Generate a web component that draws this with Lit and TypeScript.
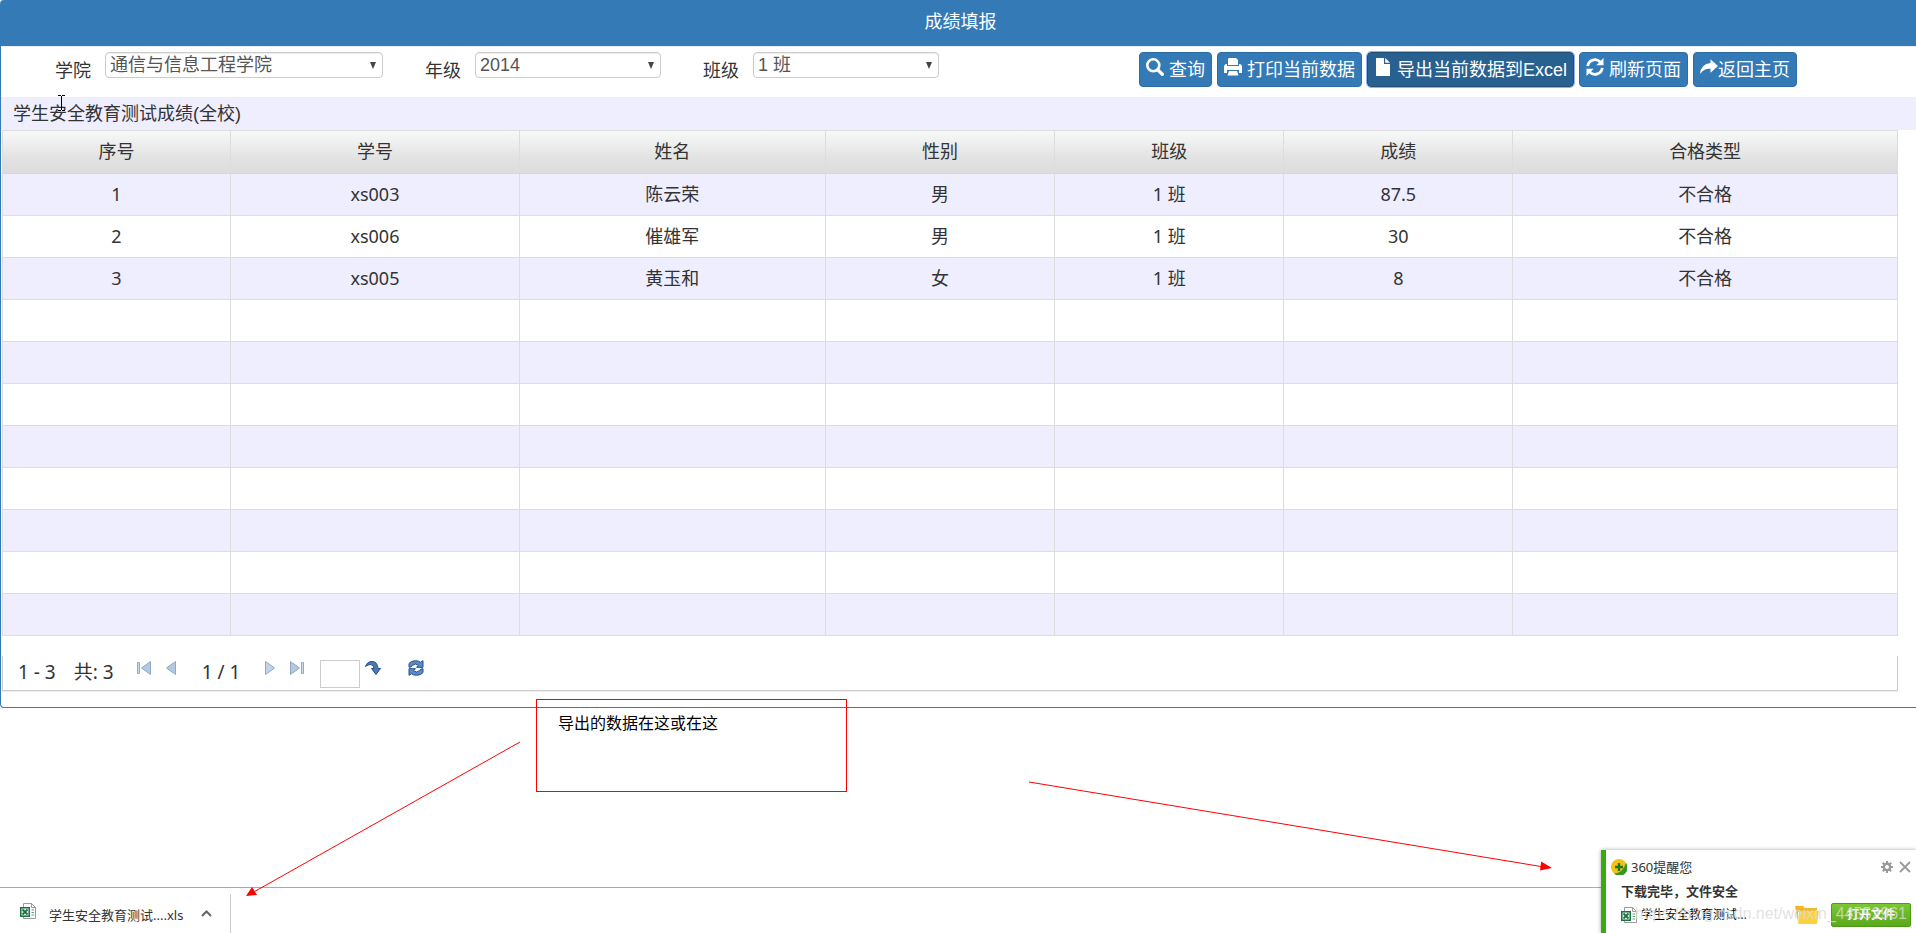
import { LitElement, html, svg, css } from "lit";
import { customElement, state } from "lit/decorators.js";

type Student = [string, string, string, string, string, string, string];

const COLUMNS = ["序号", "学号", "姓名", "性别", "班级", "成绩", "合格类型"];
const COL_WIDTHS = ["12.03%", "15.25%", "16.14%", "12.1%", "12.1%", "12.08%", "20.3%"];
const ROW_COUNT = 11;
const STUDENTS: Student[] = [
  ["1", "xs003", "陈云荣", "男", "1 班", "87.5", "不合格"],
  ["2", "xs006", "催雄军", "男", "1 班", "30", "不合格"],
  ["3", "xs005", "黄玉和", "女", "1 班", "8", "不合格"],
];

const icons = {
  search: svg`<circle cx="7.3" cy="7.300" r="6" fill="none" stroke="currentColor" stroke-width="2.600"/><path d="M12 12L16.400 16.400" stroke="currentColor" stroke-width="3.400" stroke-linecap="round"/>`,
  print: svg`<path d="M5 0h7l2 2v5H4V1z"/><path d="M0 9q0-3 3-3v2h12V6q3 0 3 3v6h-3v-3H3v3H0z"/><path d="M5 13h8l1.500 4.500h-11z"/>`,
  file: svg`<path d="M2 0h8v6h6v12H2z"/><path d="M11.200 0L16 4.800h-4.800z"/>`,
  refresh: svg`<path d="M1.700 8.200A7.300 7.300 0 0 1 14.200 4" fill="none" stroke="currentColor" stroke-width="2.800"/><path d="M17.500 0v7.200h-7.200z"/><path d="M16.300 9.800A7.300 7.300 0 0 1 3.800 14" fill="none" stroke="currentColor" stroke-width="2.800"/><path d="M.5 18v-7.200h7.200z"/>`,
  share: svg`<path d="M10.500 1.200L18 8l-7.500 6.800v-4Q4 10.300 0 16Q.8 6 10.500 5z"/>`,
};

const excelIcon = html`<svg class="i16" viewBox="0 0 16 16" aria-hidden="true">
  <path d="M3.500 .5h8l4 4v11h-12z" fill="#fff" stroke="#9a9a9a"/>
  <path d="M11.500 .5v4h4" fill="none" stroke="#9a9a9a"/>
  <path d="M11.500 7h2.500M11.500 9.500h2.500M11.500 12h2.500" stroke="#5aa07a"/>
  <path d="M0 4h10v10H0z" fill="#1e7145"/>
  <path d="M1.500 5.500h7v7h-7z" fill="#e3f0e8"/>
  <path d="M2.500 6.500l5 5M7.500 6.500l-5 5" stroke="#1e7145" stroke-width="1.800"/>
</svg>`;

@customElement("app-root")
export class AppRoot extends LitElement {
  @state() private page = "";

  static styles = css`
    :host {
      display: flex;
      flex-direction: column;
      position: relative;
      min-height: 100vh;
      overflow: hidden;
      background: #fff;
      color: #333;
      font: 18px/24px "Liberation Sans", "Noto Sans CJK SC", sans-serif;
    }
    * { box-sizing: border-box; }
    svg { display: block; fill: currentColor; }
    .i16 { width: 16px; height: 16px; flex: none; }
    .i18 { width: 18px; height: 18px; flex: none; }
    button, input, select { font: inherit; color: inherit; margin: 0; }
    button { cursor: pointer; }

    .panel {
      border: 1px solid #337ab7;
      border-right: 0;
      border-radius: 4px 0 0 4px;
      padding-bottom: 16px;
    }
    .panel-title {
      margin: 0;
      padding: 9px 0 12px 4px;
      background: #337ab7;
      color: #fff;
      font-size: 18px;
      line-height: 24px;
      font-weight: 400;
      text-align: center;
    }
    .toolbar {
      display: flex;
      justify-content: space-between;
      align-items: flex-start;
      height: 52px;
      padding: 5px 119px 0 54px;
      border-top: 1px solid #eee;
      border-bottom: 1px solid #eee;
    }
    .filters { display: flex; gap: 42px; }
    .field { display: flex; gap: 14px; }
    .field label { padding-top: 7px; }
    .pick { display: grid; width: 186px; height: 26px; }
    .pick.wide { width: 278px; }
    .pick select {
      grid-area: 1 / 1;
      appearance: none;
      border: 1px solid #ccc;
      border-radius: 4px;
      background: #fff;
      box-shadow: inset 0 1px 1px rgba(0, 0, 0, 0.08);
      color: #555;
      padding: 0 20px 0 4px;
      line-height: 24px;
    }
    .pick svg {
      grid-area: 1 / 1;
      place-self: center end;
      margin-right: 7px;
      width: 6px;
      height: 7px;
      color: #444;
      pointer-events: none;
    }
    .actions { display: flex; gap: 5px; }
    .btn {
      display: flex;
      gap: 5px;
      height: 35px;
      padding: 5px 6px 0;
      border: 1px solid #2e6da4;
      border-radius: 4px;
      background: #337ab7;
      color: #fff;
      white-space: nowrap;
    }
    .btn.tight { gap: 0; }
    .btn.active {
      background: #286090;
      border-color: #204d74;
      outline: 1px solid #8fb2f0;
    }

    .caption {
      padding: 4px 12px;
      height: 32px;
      background: #eeeeff;
    }
    .grid, .pager {
      font-family: "Noto Sans", "Noto Sans CJK SC", sans-serif;
      margin: 0 18px 0 1px;
    }
    .grid table {
      width: 100%;
      table-layout: fixed;
      border-collapse: collapse;
    }
    .grid th, .grid td {
      height: 42px;
      padding: 0 0 2px;
      border: 1px solid #ddd;
      font-weight: 400;
      line-height: 24px;
      text-align: center;
    }
    .grid th {
      height: 43px;
      border-bottom-color: #d8d8d8;
    }
    .grid thead tr { background: linear-gradient(#f7f9f8, #e3e3e3 60%, #dcdcdc); }
    .grid tbody tr:nth-child(odd) { background: #eeeeff; }

    .pager {
      display: flex;
      align-items: flex-start;
      height: 35px;
      margin-top: 20px;
      padding: 4px 15px 0;
      border: solid #ccc;
      border-width: 0 1px 1px;
      box-shadow: 0 1px #eee;
      font-size: 19px;
    }
    .pager span { white-space: nowrap; }
    .pager .total { margin-left: 18px; }
    .pager .pages { margin: 0 24px 0 25px; }
    .pager button {
      padding: 0;
      border: 0;
      background: none;
      color: #9bb2d3;
    }
    .pager .first { margin: 0 13px 0 22px; }
    .pager .last { margin: 0 15px 0 13px; }
    .pager input {
      width: 40px;
      height: 28px;
      border: 1px solid #ccc;
      padding: 0 4px;
      margin-right: 5px;
    }
    .pager .go { margin-right: 27px; }

    .note {
      position: absolute;
      left: 536px;
      top: 699px;
      width: 311px;
      height: 93px;
      padding: 12px 21px;
      border: 1px solid #f00;
      color: #000;
      font-size: 16px;
    }
    .arrows {
      position: absolute;
      left: 0;
      top: 0;
      width: 1916px;
      height: 933px;
      pointer-events: none;
    }
    .cursor {
      position: absolute;
      left: 57px;
      top: 95px;
      width: 9px;
      height: 16px;
      pointer-events: none;
    }

    .downloads {
      display: flex;
      align-items: stretch;
      height: 46px;
      margin-top: auto;
      border-top: 1px solid #aaa;
      font-size: 13px;
      line-height: 20px;
    }
    .download {
      display: flex;
      align-items: flex-start;
      width: 231px;
      margin-top: 6px;
      padding: 9px 18px 0 20px;
      border-right: 1px solid #ccc;
    }
    .download a {
      margin: 2px auto 0 13px;
      color: #333;
      text-decoration: none;
      font-family: "Noto Sans", "Noto Sans CJK SC", sans-serif;
    }
    .download button {
      padding: 7px 0 0;
      border: 0;
      background: none;
      color: #666;
    }

    .toast {
      position: absolute;
      right: 0;
      bottom: 0;
      width: 315px;
      height: 83px;
      padding: 7px 5px 0 5px;
      border-left: 5px solid #3aab0c;
      background: #fff;
      box-shadow: 0 0 4px rgba(0, 0, 0, 0.35);
      font: 13px/20px "Noto Sans", "Noto Sans CJK SC", sans-serif;
    }
    .toast-head, .toast-file { display: flex; align-items: center; }
    .toast-head h2 {
      margin: 0 auto 0 4px;
      font-size: 13px;
      line-height: 20px;
      font-weight: 400;
    }
    .toast-head button {
      padding: 0;
      border: 0;
      background: none;
      color: #999;
      margin-left: 6px;
    }
    .toast p {
      margin: 4px 0 2px 10px;
      font-weight: 600;
    }
    .toast-file {
      height: 24px;
      padding-left: 10px;
      color: #000;
      font-size: 12px;
    }
    .toast-file span { margin: 0 auto 0 4px; }
    .open {
      width: 80px;
      height: 24px;
      margin-left: 12px;
      padding: 0;
      border: 1px solid #4b9c18;
      border-radius: 2px;
      background: linear-gradient(#7cc832, #5aa81c);
      color: #fff;
      font-weight: 700;
    }
    .watermark {
      position: absolute;
      right: 9px;
      bottom: 7px;
      color: rgba(218, 218, 218, 0.8);
      font: 16px/24px "Liberation Sans", sans-serif;
      white-space: nowrap;
      pointer-events: none;
    }
  `;

  private picker(id: string, label: string, value: string, wide = false) {
    return html`<div class="field">
      <label for=${id}>${label}</label>
      <div class="pick ${wide ? "wide" : ""}">
        <select id=${id}><option>${value}</option></select>
        <svg viewBox="0 0 6 7" aria-hidden="true"><path d="M0 0h6L3 7z"/></svg>
      </div>
    </div>`;
  }

  private action(icon: unknown, label: string, extra = "") {
    return html`<button class="btn ${extra}" type="button">
      <svg class="i18" viewBox="0 0 18 18" aria-hidden="true">${icon}</svg><span>${label}</span>
    </button>`;
  }

  private renderRows() {
    return Array.from({ length: ROW_COUNT }, (_, r) => html`<tr>
      ${COLUMNS.map((_c, c) => html`<td>${STUDENTS[r]?.[c] ?? ""}</td>`)}
    </tr>`);
  }

  private renderPager() {
    return html`<nav class="pager" aria-label="分页">
      <span>1 - 3</span><span class="total">共: 3</span>
      <button class="first" aria-label="首页"><svg width="16" height="16" viewBox="0 0 16 16"><path d="M1.500 2.500h2v11h-2z" fill="#cddbea" stroke="#93abc9"/><path d="M14.500 1.500v13L5.500 8z" fill="#b4c8e0" stroke="#90a9c9"/></svg></button>
      <button aria-label="上一页"><svg width="12" height="16" viewBox="0 0 12 16"><path d="M10.500 1.500v13L1.500 8z" fill="#b4c8e0" stroke="#90a9c9"/></svg></button>
      <span class="pages">1 / 1</span>
      <button aria-label="下一页"><svg width="12" height="16" viewBox="0 0 12 16"><path d="M1.500 1.500v13l9-6.500z" fill="#c2d3e7" stroke="#90a9c9"/></svg></button>
      <button class="last" aria-label="末页"><svg width="16" height="16" viewBox="0 0 16 16"><path d="M1.500 1.500v13l9-6.500z" fill="#b4c8e0" stroke="#90a9c9"/><path d="M12.500 2.500h2v11h-2z" fill="#cddbea" stroke="#93abc9"/></svg></button>
      <input aria-label="页码" .value=${this.page} @input=${(e: Event) => (this.page = (e.target as HTMLInputElement).value)} />
      <button class="go" aria-label="跳转"><svg width="16" height="16" viewBox="0 0 16 16"><path d="M.5 6.500Q2 1.500 7 1.500q5.500 0 6 7h2.500L11 14.500 6.500 8.500H9q0-4-3.500-4Q3 4.500.5 6.500z" fill="#4a79b5" stroke="#234d85"/></svg></button>
      <button aria-label="刷新"><svg width="16" height="16" viewBox="0 0 16 16"><path d="M1 7.300V3.500Q3 .7 7.500.7q3 0 5 1.600L15 .7v6.600H8.500l2-2Q7 2.600 4.500 5.500 3 7.300 1 7.300z" fill="#5b8ac4" stroke="#24508c"/><path d="M15 8.700v3.800q-2 2.800-6.500 2.800-3 0-5-1.600L1 15.300V8.700h6.500l-2 2q3.500 2.700 6-.2 1.500-1.800 3.500-1.800z" fill="#5b8ac4" stroke="#24508c"/></svg></button>
    </nav>`;
  }

  render() {
    return html`
      <main class="panel">
        <h1 class="panel-title">成绩填报</h1>
        <div class="toolbar">
          <div class="filters">
            ${this.picker("college", "学院", "通信与信息工程学院", true)}
            ${this.picker("grade", "年级", "2014")}
            ${this.picker("class", "班级", "1 班")}
          </div>
          <div class="actions">
            ${this.action(icons.search, "查询")}
            ${this.action(icons.print, "打印当前数据")}
            ${this.action(icons.file, "导出当前数据到Excel", "active")}
            ${this.action(icons.refresh, "刷新页面")}
            ${this.action(icons.share, "返回主页", "tight")}
          </div>
        </div>
        <div class="caption">学生安全教育测试成绩(全校)</div>
        <div class="grid">
          <table>
            <colgroup>${COL_WIDTHS.map((w) => html`<col style="width:${w}" />`)}</colgroup>
            <thead><tr>${COLUMNS.map((c) => html`<th scope="col">${c}</th>`)}</tr></thead>
            <tbody>${this.renderRows()}</tbody>
          </table>
        </div>
        ${this.renderPager()}
      </main>

      <footer class="downloads">
        <div class="download">
          ${excelIcon}<a href="#">学生安全教育测试....xls</a>
          <button aria-label="更多"><svg width="11" height="7" viewBox="0 0 11 7"><path d="M1 6l4.500-4.500L10 6" fill="none" stroke="currentColor" stroke-width="2"/></svg></button>
        </div>
      </footer>

      <svg class="cursor" viewBox="0 0 9 16" aria-hidden="true"><path d="M1 .5h3M5 .5h3M4.500 1v14M1 15.500h3M5 15.500h3" stroke="#000"/></svg>
      <div class="note">导出的数据在这或在这</div>
      <svg class="arrows" viewBox="0 0 1916 933" aria-hidden="true">
        <path d="M520 742L252 893M1029 782L1544 867" stroke="#f00" fill="none"/>
        <path d="M246 896l6-9 5 8z" fill="#f00"/>
        <path d="M1552 868l-12 2.500 1.200-9z" fill="#f00"/>
      </svg>

      <aside class="toast">
        <div class="toast-head">
          <svg class="i16" viewBox="0 0 16 16" aria-hidden="true"><circle cx="8" cy="8" r="8" fill="#f3c416"/><path d="M15 4A8 8 0 0 1 3 14.500Q12 14 15 4z" fill="#35962a"/><path d="M8 4v8M4 8h8" stroke="#1f7a1a" stroke-width="2.400"/></svg>
          <h2>360提醒您</h2>
          <button aria-label="设置"><svg width="12" height="12" viewBox="0 0 12 12"><circle cx="6" cy="6" r="3.200" fill="none" stroke="currentColor" stroke-width="2.400"/><path d="M6 0v2.500M6 9.500V12M0 6h2.500M9.500 6H12M1.800 1.800l1.700 1.700M8.500 8.500l1.700 1.700M10.200 1.800L8.500 3.500M3.500 8.500l-1.700 1.700" stroke="currentColor" stroke-width="2"/></svg></button>
          <button aria-label="关闭"><svg width="12" height="12" viewBox="0 0 12 12"><path d="M1 1l10 10M11 1L1 11" stroke="currentColor" stroke-width="1.800"/></svg></button>
        </div>
        <p>下载完毕，文件安全</p>
        <div class="toast-file">
          ${excelIcon}<span>学生安全教育测试...</span>
          <svg width="24" height="20" viewBox="0 0 24 20" aria-hidden="true"><path d="M0 1h8l2 2h12v4H3v10z" fill="#f2b824"/><path d="M4 6h20l-2 13H3z" fill="#fdd23c"/></svg>
          <button class="open" type="button">打开文件</button>
        </div>
      </aside>
      <div class="watermark">https://blog.csdn.net/weixin_44552961</div>
    `;
  }
}
